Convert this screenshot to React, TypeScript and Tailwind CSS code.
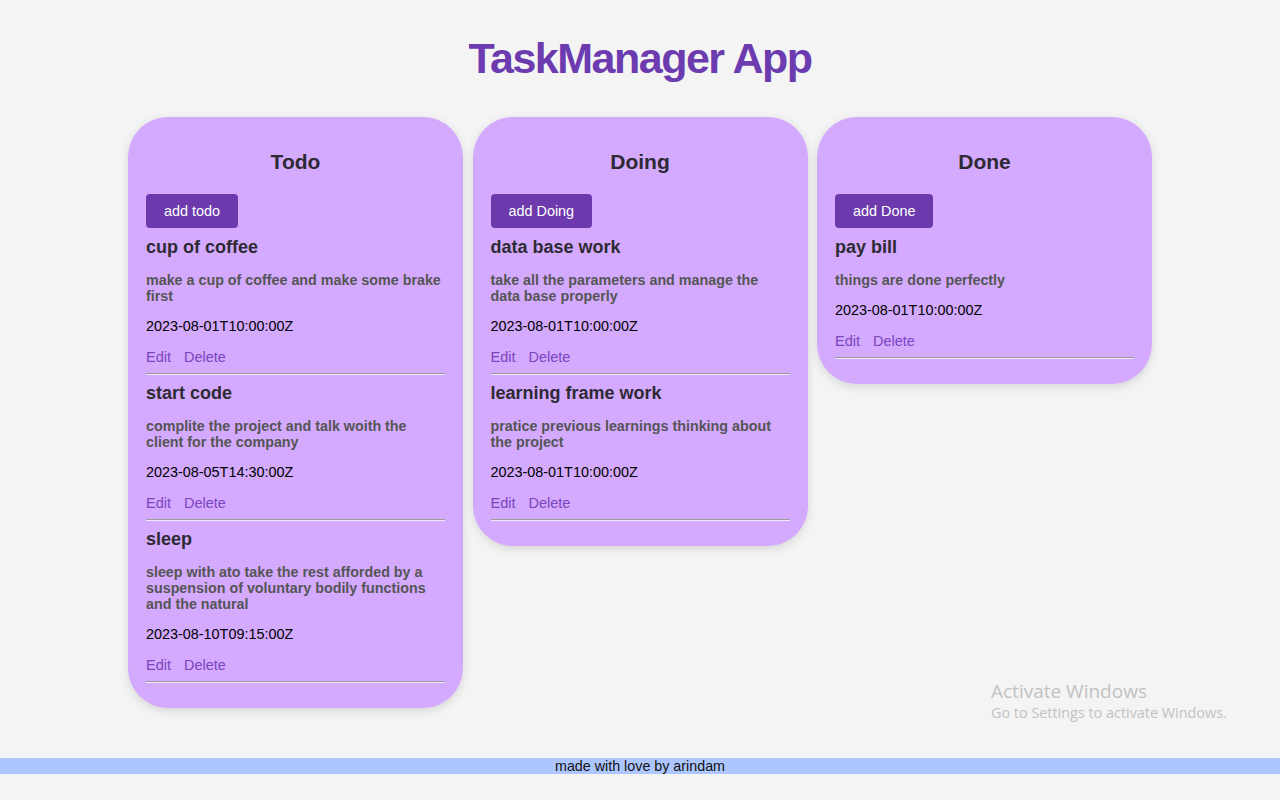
const COLUMNS = [
  {
    title: 'Todo',
    button: 'add todo',
    tasks: [
      {
        name: 'cup of coffee',
        desc: 'make a cup of coffee and make some brake first',
        date: '2023-08-01T10:00:00Z',
      },
      {
        name: 'start code',
        desc: 'complite the project and talk woith the client for the company',
        date: '2023-08-05T14:30:00Z',
      },
      {
        name: 'sleep',
        desc: 'sleep with ato take the rest afforded by a suspension of voluntary bodily functions and the natural',
        date: '2023-08-10T09:15:00Z',
      },
    ],
  },
  {
    title: 'Doing',
    button: 'add Doing',
    tasks: [
      {
        name: 'data base work',
        desc: 'take all the parameters and manage the data base properly',
        date: '2023-08-01T10:00:00Z',
      },
      {
        name: 'learning frame work',
        desc: 'pratice previous learnings thinking about the project',
        date: '2023-08-01T10:00:00Z',
      },
    ],
  },
  {
    title: 'Done',
    button: 'add Done',
    tasks: [
      {
        name: 'pay bill',
        desc: 'things are done perfectly',
        date: '2023-08-01T10:00:00Z',
      },
    ],
  },
]

type Task = { name: string; desc: string; date: string }

function TaskItem({ task }: { task: Task }) {
  return (
    <div>
      <h3 className="text-[18px] font-bold leading-[21px] text-[#2e2a33] mb-[14px]">{task.name}</h3>
      <p className="text-[14.3px] font-bold leading-4 text-[#555]">{task.desc}</p>
      <p className="text-[14.4px] leading-4 text-black mt-[14px]">{task.date}</p>
      <div className="flex gap-[13px] text-[14.5px] leading-4 text-[#7a45bd] mt-[15px]">
        <span>Edit</span>
        <span>Delete</span>
      </div>
      <hr className="mt-2 mb-[8px] border-t border-t-[#9c9c9c] border-b border-b-[#f0e6ff]" />
    </div>
  )
}

export default function App() {
  return (
    <div className="min-h-[800px] bg-[#f4f4f4] font-['Liberation_Sans',Arial,sans-serif] relative">
      <h1 className="pt-[33px] text-center text-[43px] leading-[50px] font-bold tracking-[-1.5px] text-[#6c3bb0]">
        TaskManager App
      </h1>

      <div className="flex justify-center items-start gap-[9.5px] mt-[34px]">
        {COLUMNS.map((col) => (
          <div
            key={col.title}
            className="w-[335px] bg-[#d4aaff] rounded-[40px] px-[18px] pt-[33px] pb-[17px] shadow-[0_3px_10px_rgba(0,0,0,0.12)]"
          >
            <h2 className="text-center text-[21px] font-bold leading-6 text-[#2e2a33]">{col.title}</h2>
            <button className="mt-5 mb-[9px] bg-[#6c3aad] text-white text-[14.4px] leading-[14px] px-[18px] py-[10px] rounded-[4px]">
              {col.button}
            </button>
            {col.tasks.map((task) => (
              <TaskItem key={task.name} task={task} />
            ))}
          </div>
        ))}
      </div>

      <footer className="mt-[50px] bg-[#adc6ff] text-center text-[14.3px] leading-4 text-[#111]">
        made with love by arindam
      </footer>

      {/* watermark overlay */}
      <div className="absolute left-[991px] top-[679px] font-['Open_Sans','Noto_Sans',sans-serif] text-[#c2c2c2]">
        <div className="text-[19px] leading-6">Activate Windows</div>
        <div className="text-[14.4px] leading-5">Go to Settings to activate Windows.</div>
      </div>
    </div>
  )
}
